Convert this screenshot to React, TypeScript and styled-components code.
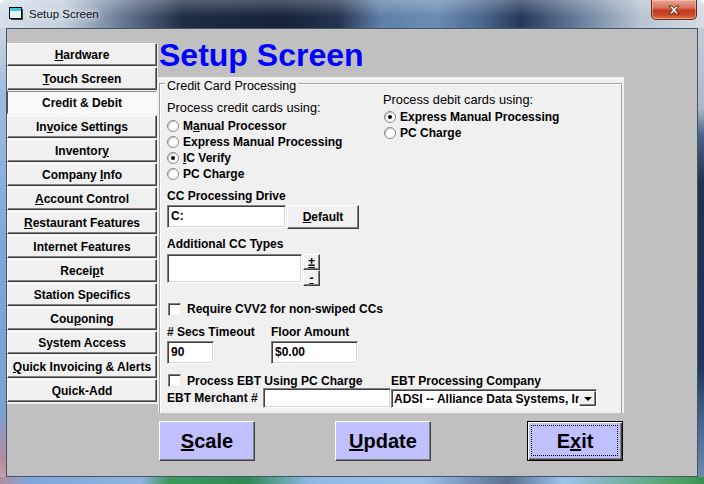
import React from 'react';
import styled, { createGlobalStyle } from 'styled-components';

const GlobalStyle = createGlobalStyle`
  html, body { margin: 0; padding: 0; }
  body {
    width: 704px;
    height: 484px;
    overflow: hidden;
    font-family: "Liberation Sans", Arial, sans-serif;
  }
`;

const Window = styled.div`
  width: 704px;
  height: 484px;
  display: grid;
  grid-template-columns: 6px 1fr 6px;
  grid-template-rows: 28px 1fr 7px;
  overflow: hidden;
`;

const TitleBar = styled.div`
  grid-column: 1 / 4;
  display: flex;
  align-items: flex-start;
  background:
    linear-gradient(180deg, rgba(255, 255, 255, 0.25), rgba(255, 255, 255, 0) 60%),
    linear-gradient(90deg, #d6dfe9 0%, #c3cfdc 9%, #6a7c96 17%, #1f2c46 26%, #17223a 40%,
      #24334f 48%, #5d80a8 54%, #6b8db3 62%, #4c6a90 68%, #26385a 74%, #6f85a2 83%,
      #b9c4d1 91%, #d5dce4 100%);
  border-radius: 6px 6px 0 0;
`;

const AppIcon = styled.svg`
  margin: 7px 0 0 9px;
  flex: none;
`;

const TitleText = styled.div`
  margin: 7px 0 0 6px;
  font-size: 11.5px;
  line-height: 14px;
  color: #0b1020;
  text-shadow: 0 0 6px #fff, 0 0 10px rgba(255, 255, 255, 0.9);
`;

const CloseButton = styled.div`
  margin-left: auto;
  margin-right: 7px;
  width: 46px;
  height: 20px;
  box-sizing: border-box;
  border: 1px solid #6a2a22;
  border-top: none;
  border-radius: 0 0 5px 5px;
  background: linear-gradient(180deg, #e9a796 0%, #d8755e 40%, #c4391f 55%, #c94a2c 80%, #e07a50 100%);
  box-shadow: inset 0 0 0 1px rgba(255, 220, 200, 0.45);
  display: flex;
  align-items: center;
  justify-content: center;
`;

const LeftFrame = styled.div`
  background: linear-gradient(180deg, #c9d5e2 0%, #9dbbe0 15%, #7ea6d8 50%, #78a1d4 85%, #b58b9c 96%, #c4a0ac 100%);
`;

const RightFrame = styled.div`
  background: linear-gradient(180deg, #c3ccd6 0%, #aab8c8 18%, #4a6284 24%, #1f2f4e 35%, #22355a 75%, #4d6d96 90%, #6a8ab0 100%);
`;

const BottomFrame = styled.div`
  grid-column: 1 / 4;
  background: linear-gradient(90deg, #b08ea0 0%, #7ea6d8 4%, #8fb4e0 20%, #3d9a5c 24%, #2e8a52 35%, #8fb8e4 44%,
    #9cc2ea 60%, #5a7090 72%, #9cc2ea 80%, #4ca060 97%, #3a9050 100%);
`;

const Client = styled.div`
  grid-column: 2;
  border: 1px solid #46546a;
  background: #c0c0c0;
  display: flex;
  align-items: flex-start;
  min-height: 0;
`;

const Nav = styled.div`
  margin-top: 14px;
  width: 151px;
  background: #f0f0f0;
  display: flex;
  flex-direction: column;
  gap: 1px;
  padding-bottom: 2px;
`;

const NavButton = styled.div<{ $active?: boolean }>`
  width: 150px;
  height: 23px;
  box-sizing: border-box;
  display: flex;
  align-items: center;
  justify-content: center;
  font-size: 12px;
  font-weight: bold;
  color: #000;
  white-space: nowrap;
  background: ${(p) => (p.$active ? '#f9f9f9' : '#f0f0f0')};
  border-style: solid;
  border-width: 1px;
  border-color: ${(p) => (p.$active ? '#8a8a8a #ffffff #ffffff #505050' : '#ffffff #404040 #404040 #ffffff')};
  box-shadow: ${(p) => (p.$active ? 'none' : 'inset -1px -1px #808080')};
`;

const Main = styled.div`
  padding-top: 10px;
  width: 466px;
  display: flex;
  flex-direction: column;
`;

const Heading = styled.h1`
  margin: 0 0 0 1px;
  font-size: 32px;
  line-height: 32px;
  font-weight: bold;
  color: #0000ff;
`;

const Panel = styled.div`
  margin-top: 6px;
  height: 336px;
  box-sizing: border-box;
  background: #f0f0f0;
  overflow: hidden;
  padding: 6px 2px 0 1px;
`;

const GroupBox = styled.div`
  border: 1px solid #a0a0a0;
  border-bottom: none;
  box-shadow: inset 1px 1px #ffffff;
  height: 400px;
  padding-left: 7px;
`;

const Legend = styled.div`
  margin: -5px 0 0 -2px;
  padding: 0 2px;
  width: fit-content;
  background: #f0f0f0;
  font-size: 12.5px;
  line-height: 14px;
  color: #000;
`;

const TopSection = styled.div`
  display: flex;
`;

const RadioColumn = styled.div<{ $w?: number }>`
  width: ${(p) => (p.$w ? `${p.$w}px` : 'auto')};
  display: flex;
  flex-direction: column;
`;

const Caption = styled.div<{ $mt?: number }>`
  margin-top: ${(p) => p.$mt ?? 0}px;
  font-size: 12.8px;
  line-height: 14px;
  color: #000;
`;

const Label = styled.div<{ $mt?: number }>`
  margin-top: ${(p) => p.$mt ?? 0}px;
  font-size: 12px;
  font-weight: bold;
  line-height: 14px;
  color: #000;
  white-space: nowrap;
`;

const RadioList = styled.div<{ $mt: number; $ml?: number }>`
  margin-top: ${(p) => p.$mt}px;
  margin-left: ${(p) => p.$ml ?? 0}px;
  display: flex;
  flex-direction: column;
`;

const OptionRow = styled.div`
  height: 16px;
  display: flex;
  align-items: center;
  gap: 4px;
  font-size: 12px;
  font-weight: bold;
  color: #000;
  white-space: nowrap;
`;

const RadioDot = styled.span<{ $on?: boolean }>`
  width: 12px;
  height: 12px;
  box-sizing: border-box;
  border-radius: 50%;
  background: #fff;
  border: 1px solid #858585;
  box-shadow: inset 1px 1px #c8c8c8;
  display: flex;
  align-items: center;
  justify-content: center;
  &::after {
    content: '';
    width: 4px;
    height: 4px;
    border-radius: 50%;
    background: ${(p) => (p.$on ? '#000' : 'transparent')};
  }
`;

const CheckRow = styled.div<{ $mt?: number }>`
  margin-top: ${(p) => p.$mt ?? 0}px;
  height: 16px;
  display: flex;
  align-items: center;
  font-size: 12px;
  font-weight: bold;
  color: #000;
  white-space: nowrap;
`;

const CheckBox = styled.span`
  width: 13px;
  height: 13px;
  box-sizing: border-box;
  margin: 0 6px 0 1px;
  background: #fff;
  border-style: solid;
  border-width: 1px;
  border-color: #808080 #e8e8e8 #e8e8e8 #808080;
  box-shadow: inset 1px 1px #404040;
`;

const Row = styled.div<{ $mt?: number }>`
  margin-top: ${(p) => p.$mt ?? 0}px;
  display: flex;
  align-items: flex-start;
`;

const TextBox = styled.div<{ $w: number; $h: number }>`
  width: ${(p) => p.$w}px;
  height: ${(p) => p.$h}px;
  box-sizing: border-box;
  background: #fff;
  border-style: solid;
  border-width: 1px;
  border-color: #808080 #ffffff #ffffff #808080;
  box-shadow: inset 1px 1px #404040, inset -1px -1px #d8d8d8;
  padding: 3px 0 0 3px;
  font-size: 12px;
  font-weight: bold;
  line-height: 14px;
  color: #000;
`;

const SmallButton = styled.div<{ $w: number; $h: number; $ml?: number }>`
  width: ${(p) => p.$w}px;
  height: ${(p) => p.$h}px;
  margin-left: ${(p) => p.$ml ?? 0}px;
  box-sizing: border-box;
  background: #f0f0f0;
  border-style: solid;
  border-width: 1px;
  border-color: #ffffff #404040 #404040 #ffffff;
  box-shadow: inset -1px -1px #808080;
  display: flex;
  align-items: center;
  justify-content: center;
  font-size: 12px;
  font-weight: bold;
  line-height: 12px;
  color: #000;
`;

const SpinColumn = styled.div`
  margin-left: 1px;
  display: flex;
  flex-direction: column;
`;

const FieldColumns = styled.div<{ $mt: number }>`
  margin-top: ${(p) => p.$mt}px;
  display: grid;
  grid-template-columns: 104px auto;
  grid-template-rows: 14px 23px;
  row-gap: 2px;
`;

const EbtGrid = styled.div<{ $mt: number }>`
  margin-top: ${(p) => p.$mt}px;
  display: grid;
  grid-template-columns: 96px 128px 206px;
  grid-template-rows: 15px 20px;
  align-items: center;
`;

const SpanTwo = styled.div`
  grid-column: 1 / 3;
`;

const Select = styled.div`
  align-self: end;
  height: 19px;
  box-sizing: border-box;
  background: #fff;
  border-style: solid;
  border-width: 1px;
  border-color: #808080 #ffffff #ffffff #808080;
  box-shadow: inset 1px 1px #404040;
  display: flex;
  font-size: 12px;
  font-weight: bold;
  color: #000;
`;

const SelectText = styled.div`
  flex: 1;
  overflow: hidden;
  white-space: nowrap;
  padding: 2px 0 0 2px;
  line-height: 14px;
`;

const DropButton = styled.div`
  width: 17px;
  box-sizing: border-box;
  margin: 1px 0 1px 0;
  background: #f0f0f0;
  border-style: solid;
  border-width: 1px;
  border-color: #ffffff #404040 #404040 #ffffff;
  box-shadow: inset -1px -1px #808080;
  display: flex;
  align-items: center;
  justify-content: center;
  &::after {
    content: '';
    border-left: 4px solid transparent;
    border-right: 4px solid transparent;
    border-top: 4px solid #000;
  }
`;

const ButtonRow = styled.div`
  margin-top: 8px;
  display: flex;
`;

const BigButton = styled.div<{ $offset: number; $focus?: boolean }>`
  margin-left: ${(p) => p.$offset}px;
  width: 96px;
  height: 40px;
  box-sizing: border-box;
  background: #c0c0ff;
  border-style: solid;
  border-width: 1px;
  border-color: ${(p) => (p.$focus ? '#000' : '#ffffff #404040 #404040 #ffffff')};
  box-shadow: ${(p) =>
    p.$focus ? 'inset 1px 1px #ffffff, inset -1px -1px #404040, inset -2px -2px #808080' : 'inset -1px -1px #808080'};
  display: flex;
  align-items: center;
  justify-content: center;
  font-size: 20px;
  font-weight: bold;
  color: #000;
  position: relative;
  &::before {
    content: '';
    display: ${(p) => (p.$focus ? 'block' : 'none')};
    position: absolute;
    inset: 3px 4px 4px 3px;
    border: 1px dotted #000;
  }
`;

const navItems: { label: React.ReactNode; active?: boolean }[] = [
  { label: <><u>H</u>ardware</> },
  { label: <><u>T</u>ouch Screen</> },
  { label: 'Credit & Debit', active: true },
  { label: <>In<u>v</u>oice Settings</> },
  { label: <>Inventor<u>y</u></> },
  { label: <>Company <u>I</u>nfo</> },
  { label: <><u>A</u>ccount Control</> },
  { label: <><u>R</u>estaurant Features</> },
  { label: 'Internet Features' },
  { label: <>Recei<u>p</u>t</> },
  { label: 'Station Specifics' },
  { label: <>Cou<u>p</u>oning</> },
  { label: 'System Access' },
  { label: <><u>Q</u>uick Invoicing &amp; Alerts</> },
  { label: 'Quick-Add' },
];

const creditOptions: { label: React.ReactNode; on?: boolean }[] = [
  { label: <>M<u>a</u>nual Processor</> },
  { label: 'Express Manual Processing' },
  { label: <><u>I</u>C Verify</>, on: true },
  { label: 'PC Charge' },
];

const debitOptions = [
  { label: 'Express Manual Processing', on: true },
  { label: 'PC Charge', on: false },
];

export default function App() {
  return (
    <>
      <GlobalStyle />
      <Window>
        <TitleBar>
          <AppIcon width="14" height="13" viewBox="0 0 14 13">
            <rect x="2" y="2" width="12" height="11" fill="#404040" />
            <rect x="0.5" y="0.5" width="12" height="11" fill="#ffffff" stroke="#000" />
            <rect x="1" y="1" width="11" height="3" fill="#38c8ee" />
            <rect x="2" y="5" width="9" height="5" fill="#dff4fb" />
          </AppIcon>
          <TitleText>Setup Screen</TitleText>
          <CloseButton>
            <svg width="12" height="10" viewBox="0 0 12 10">
              <path
                d="M1 1 L4 1 L6 3.3 L8 1 L11 1 L7.6 5 L11 9 L8 9 L6 6.7 L4 9 L1 9 L4.4 5 Z"
                fill="#ffffff"
                stroke="#4a1a14"
                strokeWidth="0.9"
                strokeLinejoin="round"
              />
            </svg>
          </CloseButton>
        </TitleBar>
        <LeftFrame />
        <Client>
          <Nav>
            {navItems.map((item, i) => (
              <NavButton key={i} $active={item.active}>
                <span>{item.label}</span>
              </NavButton>
            ))}
          </Nav>
          <Main>
            <Heading>Setup Screen</Heading>
            <Panel>
              <GroupBox>
                <Legend>Credit Card Processing</Legend>
                <TopSection>
                  <RadioColumn $w={216}>
                    <Caption $mt={8}>Process credit cards using:</Caption>
                    <RadioList $mt={3}>
                      {creditOptions.map((o, i) => (
                        <OptionRow key={i}>
                          <RadioDot $on={o.on} />
                          <span>{o.label}</span>
                        </OptionRow>
                      ))}
                    </RadioList>
                  </RadioColumn>
                  <RadioColumn>
                    <Caption>Process debit cards using:</Caption>
                    <RadioList $mt={2} $ml={1}>
                      {debitOptions.map((o, i) => (
                        <OptionRow key={i}>
                          <RadioDot $on={o.on} />
                          <span>{o.label}</span>
                        </OptionRow>
                      ))}
                    </RadioList>
                  </RadioColumn>
                </TopSection>

                <Label $mt={7}>CC Processing Drive</Label>
                <Row $mt={2}>
                  <TextBox $w={119} $h={23}>C:</TextBox>
                  <SmallButton $w={72} $h={24} $ml={1}>
                    <span>
                      <u>D</u>efault
                    </span>
                  </SmallButton>
                </Row>

                <Label $mt={8}>Additional CC Types</Label>
                <Row $mt={3}>
                  <TextBox $w={135} $h={29} />
                  <SpinColumn>
                    <SmallButton $w={17} $h={16}>
                      <u>±</u>
                    </SmallButton>
                    <SmallButton $w={17} $h={16}>
                      <u>-</u>
                    </SmallButton>
                  </SpinColumn>
                </Row>

                <CheckRow $mt={15}>
                  <CheckBox />
                  <span>Require CVV2 for non-swiped CCs</span>
                </CheckRow>

                <FieldColumns $mt={8}>
                  <Label># Secs Timeout</Label>
                  <Label>Floor Amount</Label>
                  <TextBox $w={47} $h={23}>90</TextBox>
                  <TextBox $w={87} $h={23}>$0.00</TextBox>
                </FieldColumns>

                <EbtGrid $mt={9}>
                  <SpanTwo>
                    <CheckRow>
                      <CheckBox />
                      <span>Process EBT Using PC Charge</span>
                    </CheckRow>
                  </SpanTwo>
                  <Label>EBT Processing Company</Label>
                  <Label>EBT Merchant #</Label>
                  <TextBox $w={128} $h={20} />
                  <Select>
                    <SelectText>ADSI -- Alliance Data Systems, Inc.</SelectText>
                    <DropButton />
                  </Select>
                </EbtGrid>
              </GroupBox>
            </Panel>
            <ButtonRow>
              <BigButton $offset={1}>
                <span>
                  <u>S</u>cale
                </span>
              </BigButton>
              <BigButton $offset={80}>
                <span>
                  <u>U</u>pdate
                </span>
              </BigButton>
              <BigButton $offset={96} $focus>
                <span>
                  E<u>x</u>it
                </span>
              </BigButton>
            </ButtonRow>
          </Main>
        </Client>
        <RightFrame />
        <BottomFrame />
      </Window>
    </>
  );
}
